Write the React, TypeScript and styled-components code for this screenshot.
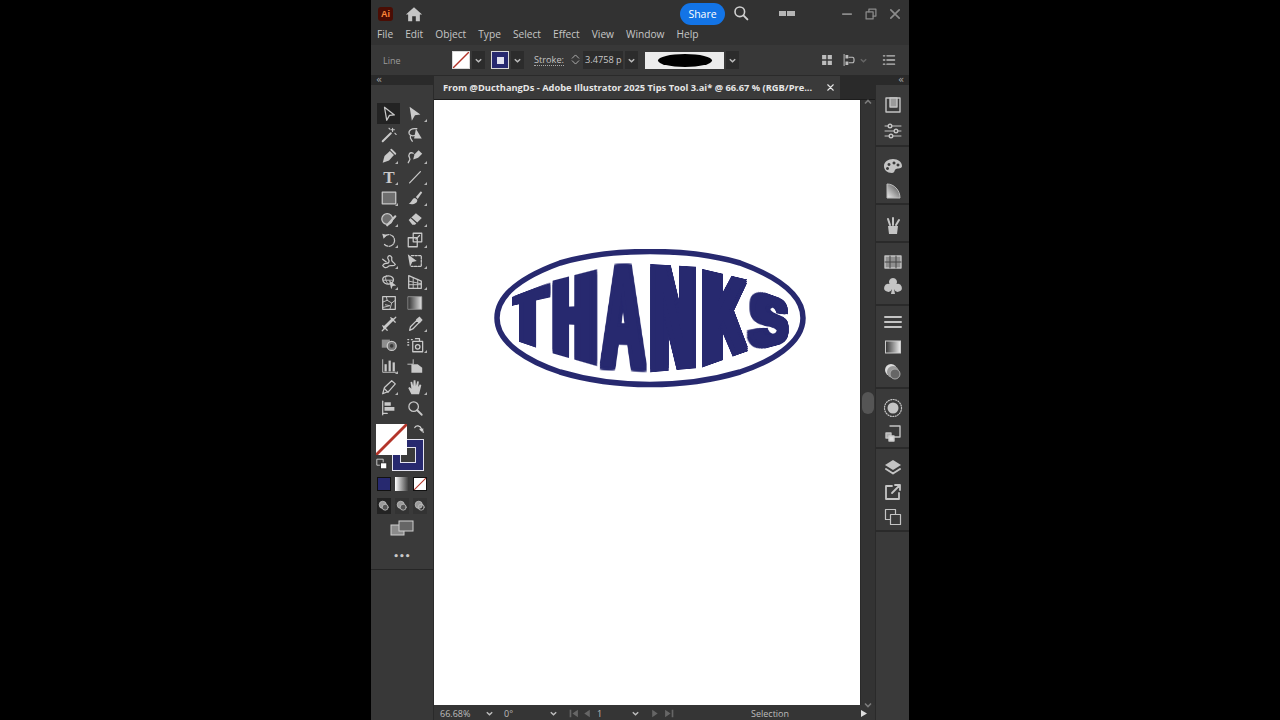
import type { ReactNode } from "react";
import styled, { createGlobalStyle } from "styled-components";

const GlobalStyle = createGlobalStyle`
  html, body, #root { margin: 0; padding: 0; height: 100%; background: #000; overflow: hidden; }
  * { box-sizing: border-box; }
`;

const Page = styled.div`
  width: 1280px;
  height: 720px;
  display: flex;
  justify-content: center;
  background: #000;
  font-family: "Open Sans", "Liberation Sans", sans-serif;
`;

const Win = styled.div`
  width: 538px;
  margin-left: 0;
  height: 720px;
  display: flex;
  flex-direction: column;
  background: #323232;
  color: #cfcfcf;
`;

const TitleBar = styled.div`
  height: 27px;
  display: flex;
  align-items: center;
  padding-left: 7px;
  background: #323232;
`;

const AiLogo = styled.div`
  width: 15px;
  height: 14px;
  border-radius: 3px;
  background: #4a0d04;
  color: #ff8a3c;
  font: bold 9px/14px "Liberation Sans", sans-serif;
  text-align: center;
`;

const HomeWrap = styled.div`
  margin-left: 12px;
  width: 20px;
  height: 18px;
  color: #c6c6c6;
`;

const Share = styled.div`
  margin-left: 255px;
  width: 45px;
  height: 22px;
  border-radius: 11px;
  background: #1374e6;
  color: #fff;
  font: 10.5px/22px "Open Sans", sans-serif;
  text-align: center;
`;

const SearchWrap = styled.div`
  margin-left: 8px;
  width: 18px;
  height: 18px;
  color: #d0d0d0;
`;

const Arrange = styled.div`
  margin-left: 28px;
  width: 16px;
  height: 5px;
  background: linear-gradient(90deg, #b5b5b5 0 7px, transparent 7px 8px, #b5b5b5 8px);
`;

const WinControls = styled.div`
  margin-left: auto;
  margin-right: 7px;
  display: flex;
  gap: 10px;
  color: #8b8b8b;
`;

const WinBtn = styled.div`
  width: 14px;
  height: 14px;
`;

const MenuBar = styled.div`
  height: 14px;
  display: flex;
  align-items: center;
  padding-left: 6px;
  gap: 12px;
  font-size: 10.2px;
  color: #c6c6c6;
  background: #323232;
`;

const ControlBar = styled.div`
  height: 30px;
  margin-top: 4px;
  display: flex;
  align-items: center;
  padding-left: 12px;
  background: #383838;
`;

const ControlLabel = styled.span`
  width: 69px;
  font-size: 9px;
  color: #9c9c9c;
`;

const Swatch = styled.div<{ $blue?: boolean; $mini?: boolean; $dark?: boolean }>`
  width: ${(p) => (p.$mini ? 14 : 18)}px;
  height: ${(p) => (p.$mini ? 14 : 18)}px;
  border: 1px solid ${(p) => (p.$dark ? "#111" : "#d8d8d8")};
  display: flex;
  align-items: center;
  justify-content: center;
  background: ${(p) => (p.$blue ? "#27296f" : "#fff")};
  overflow: hidden;
`;

const InnerWhite = styled.div`
  width: 7px;
  height: 7px;
  background: #dfe0ee;
`;

const Chevron = styled.div<{ $w?: number; $ml?: number; $dim?: boolean; $flat?: boolean }>`
  flex: none;
  width: ${(p) => p.$w ?? 13}px;
  height: ${(p) => (p.$flat ? 14 : 18)}px;
  margin-left: ${(p) => p.$ml ?? 2}px;
  display: flex;
  align-items: center;
  justify-content: center;
  background: ${(p) => (p.$flat ? "transparent" : "#2c2c2c")};
  color: ${(p) => (p.$dim ? "#666" : "#bdbdbd")};
`;

const StrokeLabel = styled.span`
  margin-left: 10px;
  width: 30px;
  font-size: 9.2px;
  color: #c4c4c4;
  border-bottom: 1px dotted #a8a8a8;
  line-height: 11px;
  white-space: nowrap;
`;

const Stepper = styled.div`
  margin-left: 5px;
  width: 13px;
  height: 18px;
  padding-top: 2px;
  color: #b8b8b8;
`;

const StrokeInput = styled.div`
  margin-left: 1px;
  width: 40px;
  height: 18px;
  padding-left: 2px;
  background: #2c2c2c;
  font: 9.2px/18px "Open Sans", sans-serif;
  color: #c8c8c8;
  white-space: nowrap;
  overflow: hidden;
`;

const BrushPreview = styled.div`
  margin-left: 7px;
  width: 79px;
  height: 17px;
  background: #ececec;
  display: flex;
  align-items: center;
  justify-content: center;
`;

const BrushBlob = styled.div`
  width: 54px;
  height: 13px;
  border-radius: 50%;
  background: #000;
`;

const ControlRight = styled.div`
  margin-left: auto;
  margin-right: 13px;
  display: flex;
  align-items: center;
  color: #bdbdbd;
`;

const SmallIcon = styled.div<{ $ml?: number }>`
  width: 14px;
  height: 14px;
  margin-left: ${(p) => p.$ml ?? 0}px;
`;

const Body = styled.div`
  flex: 1;
  display: flex;
  min-height: 0;
`;

const LeftCol = styled.div`
  width: 63px;
  flex: none;
  display: flex;
  flex-direction: column;
  background: #383838;
  border-right: 1px solid #2a2a2a;
`;

const Collapse = styled.div<{ $right?: boolean }>`
  height: 10px;
  flex: none;
  padding: 0 5px;
  display: flex;
  justify-content: ${(p) => (p.$right ? "flex-end" : "flex-start")};
  align-items: center;
  font: 10px/10px "DejaVu Sans", sans-serif;
  color: #a9a9a9;
  background: #2a2a2a;
`;

const ToolPanel = styled.div`
  height: 485px;
  flex: none;
  padding: 18px 6px 0;
  background: #3a3a3a;
  border-bottom: 1px solid #262626;
`;

const ToolGrid = styled.div`
  display: grid;
  grid-template-columns: 23px 29px;
  grid-auto-rows: 21px;
`;

const ToolCell = styled.div<{ $on?: boolean; $flag?: boolean }>`
  position: relative;
  display: flex;
  align-items: center;
  justify-content: center;
  color: #c9c9c9;
  background: ${(p) => (p.$on ? "#232323" : "transparent")};
  &::after {
    content: "";
    display: ${(p) => (p.$flag ? "block" : "none")};
    position: absolute;
    right: 2px;
    bottom: 2px;
    border-left: 3px solid transparent;
    border-bottom: 3px solid #b5b5b5;
  }
`;

const SwatchArea = styled.div`
  position: relative;
  height: 50px;
  margin-top: 6px;
`;

const FillBig = styled.div`
  position: absolute;
  left: -1px;
  top: 0;
  width: 31px;
  height: 31px;
  background: #fff;
  z-index: 2;
  overflow: hidden;
`;

const StrokeBig = styled.div`
  position: absolute;
  left: 15px;
  top: 15px;
  width: 32px;
  height: 32px;
  background: #27296f;
  border: 1px solid #e4e4f0;
  padding: 7px;
`;

const StrokeHole = styled.div`
  width: 100%;
  height: 100%;
  background: #3a3a3a;
  border: 1px solid #e4e4f0;
`;

const MiniIcon = styled.div<{ $x: number; $y: number }>`
  position: absolute;
  left: ${(p) => p.$x}px;
  top: ${(p) => p.$y}px;
  width: 12px;
  height: 12px;
  color: #d4d4d4;
`;

const ModeRow = styled.div`
  display: flex;
  gap: 4px;
  margin-top: 3px;
`;

const ModeBtn = styled.div`
  width: 14px;
  height: 14px;
  overflow: hidden;
`;

const DrawRow = styled.div`
  display: flex;
  gap: 4px;
  margin-top: 7px;
`;

const DrawBtn = styled.div<{ $on?: boolean }>`
  width: 14px;
  height: 16px;
  display: flex;
  align-items: center;
  justify-content: center;
  color: #bdbdbd;
  background: ${(p) => (p.$on ? "#232323" : "#333")};
`;

const ScreenMode = styled.div`
  margin: 5px auto 0;
  width: 24px;
  height: 18px;
  color: #bdbdbd;
`;

const Dots = styled.div`
  margin-top: 13px;
  text-align: center;
  font: bold 9px/12px "DejaVu Sans", sans-serif;
  letter-spacing: 0;
  color: #c9c9c9;
`;

const CenterCol = styled.div`
  flex: 1;
  min-width: 0;
  display: flex;
  flex-direction: column;
  background: #2a2a2a;
`;

const TabRow = styled.div`
  height: 23px;
  flex: none;
  margin-top: 1px;
  display: flex;
`;

const Tab = styled.div`
  width: 406px;
  padding: 0 4px 0 9px;
  display: flex;
  align-items: center;
  justify-content: space-between;
  background: #3a3a3a;
  font-size: 9.3px;
  font-weight: 700;
  color: #e6e6e6;
  white-space: nowrap;
`;

const CanvasRow = styled.div`
  flex: 1;
  min-height: 0;
  display: flex;
  border-top: 1px solid #1c1c1c;
  background: #333;
`;

const Canvas = styled.div`
  position: relative;
  width: 426px;
  background: #fff;
  overflow: hidden;
  flex: none;
`;

const Scrollbar = styled.div`
  position: relative;
  flex: 1;
  color: #7c7c7c;
  background: #333;
  border-left: 1px solid #2a2a2a;
`;

const ScrollThumb = styled.div`
  position: absolute;
  left: 1px;
  top: 292px;
  width: 12px;
  height: 22px;
  border-radius: 6px;
  background: #555;
`;

const ScrollArrow = styled.div<{ $top: number; $up?: boolean }>`
  position: absolute;
  left: 2px;
  top: ${(p) => p.$top}px;
  width: 10px;
  height: 10px;
  transform: ${(p) => (p.$up ? "rotate(180deg)" : "none")};
`;

const StatusBar = styled.div`
  height: 15px;
  flex: none;
  display: flex;
  align-items: center;
  padding: 2px 0 0 6px;
  font-size: 9px;
  color: #bdbdbd;
  background: #353535;
`;

const StatusText = styled.span<{ $w: number; $ml?: number }>`
  width: ${(p) => p.$w}px;
  margin-left: ${(p) => p.$ml ?? 0}px;
  flex: none;
  white-space: nowrap;
`;

const Nav = styled.div<{ $w: number; $ml?: number; $on?: boolean }>`
  display: flex;
  justify-content: space-between;
  flex: none;
  width: ${(p) => p.$w}px;
  height: 11px;
  margin-left: ${(p) => p.$ml ?? 0}px;
  color: ${(p) => (p.$on ? "#ddd" : "#666")};
`;

const RightCol = styled.div`
  width: 34px;
  flex: none;
  display: flex;
  flex-direction: column;
  background: #2a2a2a;
  border-left: 1px solid #2a2a2a;
`;

const DockGroups = styled.div`
  flex: 1;
  display: flex;
  flex-direction: column;
  gap: 2px;
`;

const DockGroup = styled.div<{ $h: number; $pad: number }>`
  height: ${(p) => p.$h}px;
  flex: none;
  padding-top: ${(p) => p.$pad}px;
  background: #3a3a3a;
  display: flex;
  flex-direction: column;
  align-items: center;
  color: #c4c4c4;
`;

const DockFill = styled.div`
  flex: 1;
  background: #3a3a3a;
`;

const DockIcon = styled.div<{ $gap?: number }>`
  width: 20px;
  height: 20px;
  flex: none;
  margin-top: ${(p) => p.$gap ?? 0}px;
`;

const LogoStage = styled.div`
  position: absolute;
  left: 60px;
  top: 149px;
  width: 314px;
  height: 140px;
`;

const LogoRing = styled.svg`
  position: absolute;
  inset: 0;
  width: 100%;
  height: 100%;
`;

const NAVY = "#27296f";

// copies of the glyph around it: a square dilation, heavy stems with sharp corners
function fatten(kx: number, ky: number) {
  const out: string[] = [];
  const steps = (k: number) => {
    const s: number[] = [];
    for (let i = -k; i < k; i += 2) s.push(i);
    s.push(k);
    return s;
  };
  for (const x of steps(kx)) for (const y of steps(ky)) out.push(`${x}px ${y}px ${NAVY}`);
  return out.join(",");
}

const WarpLetter = styled.span<{ $kx: number; $ky: number }>`
  position: absolute;
  left: 0;
  top: 0;
  text-align: center;
  transform-origin: 0 0;
  white-space: nowrap;
  font-family: "Liberation Sans", sans-serif;
  font-weight: 700;
  font-size: 100px;
  color: ${NAVY};
  text-shadow: ${(p) => fatten(p.$kx, p.$ky)};
`;

// Each letter is real text, warped onto the four corners read from the picture.
function warp(w: number, h: number, q: number[][]) {
  const [[x0, y0], [x1, y1], [x2, y2], [x3, y3]] = q;
  const dx1 = x1 - x2;
  const dx2 = x3 - x2;
  const sx = x0 - x1 + x2 - x3;
  const dy1 = y1 - y2;
  const dy2 = y3 - y2;
  const sy = y0 - y1 + y2 - y3;
  const den = dx1 * dy2 - dx2 * dy1;
  const g = (sx * dy2 - dx2 * sy) / den;
  const k = (dx1 * sy - sx * dy1) / den;
  const a = x1 - x0 + g * x1;
  const b = x3 - x0 + k * x3;
  const d = y1 - y0 + g * y1;
  const e = y3 - y0 + k * y3;
  return `matrix3d(${a / w},${d / w},0,${g / w},${b / h},${e / h},0,${k / h},0,0,1,0,${x0},${y0},0,1)`;
}

// corners in the 3x zoom of the logo: TL, TR, BR, BL
const toStage = (p: number[]) => [p[0] / 3 + 485 - 494, p[1] / 3 + 240 - 249];

const LETTERS: { c: string; ink: number; kx: number; ky: number; dx?: number; q: number[][] }[] = [
  { c: "T", ink: 57, kx: 12, ky: 2, dx: 5, q: [[80, 172], [188, 132], [188, 335], [80, 298]] },
  { c: "H", ink: 58, kx: 10, ky: 2, q: [[203, 122], [335, 88], [335, 378], [203, 340]] },
  { c: "A", ink: 72, kx: 6, ky: 2, q: [[340, 76], [490, 73], [490, 397], [340, 390]] },
  { c: "N", ink: 58, kx: 8, ky: 2, q: [[497, 72], [632, 80], [632, 385], [497, 397]] },
  { c: "K", ink: 64, kx: 8, ky: 2, q: [[645, 85], [785, 118], [785, 335], [645, 385]] },
  { c: "S", ink: 61, kx: 7, ky: 4, q: [[785, 140], [912, 185], [912, 305], [785, 338]] },
];

function Logo() {
  return (
    <LogoStage>
      <LogoRing viewBox="0 0 314 140">
        <path
          d="M3 69 C3 43 36 25 66 14 C96 5 126 2.500 156 2.500 C186 2.500 216 5 246 14 C276 25 309 43 309 69 C309 95 276 113 246 123 C216 132 186 135.500 156 135.500 C126 135.500 96 132 66 123 C36 113 3 95 3 69 Z"
          fill="none"
          stroke={NAVY}
          strokeWidth="5.500"
        />
      </LogoRing>
      {LETTERS.map((l) => {
        const w = l.ink + 2 * l.kx;
        const h = 69 + 2 * l.ky;
        return (
          <WarpLetter
            key={l.c}
            $kx={l.kx}
            $ky={l.ky}
            style={{
              width: w,
              height: h,
              lineHeight: h + "px",
              paddingLeft: l.dx ?? 0,
              transform: warp(w, h, l.q.map(toStage)),
            }}
          >
            {l.c}
          </WarpLetter>
        );
      })}
    </LogoStage>
  );
}

function Ico({ children, s = 20 }: { children: ReactNode; s?: number }) {
  return (
    <svg
      width={s}
      height={s}
      viewBox="0 0 20 20"
      fill="none"
      stroke="currentColor"
      strokeWidth="1.400"
      strokeLinejoin="round"
      strokeLinecap="round"
      style={{ display: "block" }}
    >
      {children}
    </svg>
  );
}

const F = { fill: "currentColor", stroke: "none" };

const TOOLS: { n: ReactNode; flag?: boolean; on?: boolean }[] = [
  { on: true, n: <path d="M5 2.500 L16 11 L10.500 11.500 L7.500 17 Z" /> },
  { flag: true, n: <path {...F} d="M4 2 L16 10.500 L10 11.500 L6.500 17.500 Z" /> },
  { flag: false, n: <><path d="M3 17 L12 8" strokeWidth="2.200" /><path d="M14 2.500 V6 M12.300 4.200 H16 M16.500 8 L18 9.500 M10 2.500 L11 3.500" strokeWidth="1.200" /></> },
  { n: <><path d="M12 3 C6 2 2.500 5 3.500 8.500 C4.500 11 8 11.500 11 10" /><path {...F} d="M11 3 L17.500 14 L9 14 Z" /><path d="M5 11 C4 14 6 15 7 17" /></> },
  { flag: true, n: <><path {...F} d="M3 17.500 L5 10 L11 4.500 L15.500 9 L10 15 Z" /><path d="M12.500 3 L17 7.500" strokeWidth="2" /></> },
  { flag: true, n: <><path {...F} d="M8 14 L9.500 8 L14 3.500 L18 7.500 L13.500 12 Z" /><path d="M8 7 C4 5 2 9 4 12 C5.500 14 3 16 2.500 17.500" /></> },
  { flag: true, n: <text x="10" y="16.500" textAnchor="middle" fontFamily="Liberation Serif" fontWeight="700" fontSize="19" fill="currentColor" stroke="none">T</text> },
  { flag: true, n: <path d="M4 16.500 L16 4" /> },
  { flag: true, n: <rect x="2.500" y="3.500" width="15" height="13" fill="#6f6f6f" stroke="#c9c9c9" /> },
  { flag: true, n: <><path {...F} d="M11 9 L16.500 2.500 L18 4 L13 11 Z" /><path {...F} d="M10 10 C7 10 7 14 3 16.500 C8 18 13 16 12.500 12 Z" /></> },
  { flag: true, n: <><circle cx="8" cy="10" r="6" fill="#6f6f6f" /><path d="M8 17 L17 7" strokeWidth="2.400" /></> },
  { flag: true, n: <><path {...F} d="M3 11 L11 3.500 L17.500 9 L10 16.500 H7 Z" /><path d="M6 9 L12 14.500" stroke="#3a3a3a" /></> },
  { flag: true, n: <><path d="M5 6 A6.500 6.500 0 1 1 5 15" strokeDasharray="5 1.500" /><path {...F} d="M2.500 3 L8 4.500 L4 8.500 Z" /></> },
  { flag: true, n: <><rect x="2.500" y="7.500" width="10" height="10" /><rect x="8" y="2.500" width="9.500" height="9.500" /><path d="M11 9 L15 5" /></> },
  { flag: true, n: <><path d="M3 15 C6 10 8 15 10 11 C11 8 7 8 9 5 C11 3 14 5 13 8 C12 11 16 11 17 14 C14 17 11 13 8 17 C6 18 4 17 3 15 Z" /><path d="M3 8 L7 11" /></> },
  { flag: true, n: <><path d="M6 4 H17 V16 H6" strokeDasharray="2.500 1.500" /><path {...F} d="M2 2.500 L12 10 L7 11 L4.500 16.500 Z" /></> },
  { flag: true, n: <><path d="M3 7 C3 3 11 2 14 5 C16 7 15 11 11 12 C7 13 3 11 3 7 Z" /><path d="M7 3 C5 6 7 10 9 12 M3.500 8 H14" strokeWidth="1" /><path {...F} d="M10 8 L18 14 L14 14.500 L12.500 18 Z" /></> },
  { flag: true, n: <><path d="M3 3 L17 9 V17 H3 Z" /><path d="M8 5 V17 M13 7 V17 M3 9 L17 12 M3 13 H17" strokeWidth="1" /></> },
  { n: <><rect x="3" y="3" width="14" height="14" /><path d="M3 9 L8 7 L7 3 M8 7 L13 10 L17 7 M13 10 L11 17 M6 12 L11 13 L3 15" strokeWidth="1" /></> },
  { n: <><defs><linearGradient id="grd"><stop offset="0" stopColor="#333" /><stop offset="1" stopColor="#e2e2e2" /></linearGradient></defs><rect x="2.500" y="3" width="15" height="14" fill="url(#grd)" stroke="#a0a0a0" strokeWidth="0.800" /></> },
  { n: <><path d="M5 14 L14 5" strokeWidth="3.200" /><path d="M3 12 L8 17 M12 3 L17 8 M2.500 17.500 L5 15 M15 5 L17.500 2.500" /></> },
  { flag: true, n: <><path d="M4 17 L5 13 L12 6 L14.500 8.500 L7.500 15.500 Z" /><path {...F} d="M11 5 L15 1.800 L18.500 5.500 L15 9.500 Z" /></> },
  { n: <><rect x="2" y="4" width="9" height="9" fill="#8e8e8e" stroke="none" /><circle cx="13" cy="11" r="5" fill="#777" /><circle cx="13" cy="11" r="2" fill="#3a3a3a" stroke="none" /></> },
  { flag: true, n: <><path d="M2 4 H4 M2 7 H4 M6 4 H8 M2 10 H4" strokeDasharray="1 1" /><rect x="7.500" y="6" width="11" height="11.500" /><circle cx="13" cy="12" r="2.500" /><path d="M10.500 3 H15 V6" /></> },
  { flag: true, n: <><path d="M3 3 V17 H18" strokeWidth="1" /><rect x="5" y="8" width="2.500" height="8" {...F} /><rect x="9.500" y="4" width="2.500" height="12" {...F} /><rect x="14" y="6" width="2.500" height="10" {...F} /></> },
  { n: <><path d="M8 3 V8 H2" strokeWidth="1" /><path {...F} d="M6 8 H13 L18 12 V17.500 H6 Z" /></> },
  { flag: true, n: <><path d="M3 17.500 L5 10.500 L13 3 L17 6.500 L10 14.500 Z" /><path d="M5 12 L9 16" /></> },
  { flag: true, n: <path {...F} d="M6 18 L2.500 11 L4 10 L6 12 L5 4.500 L6.800 4.200 L8 9 L8.500 2.500 L10.500 2.500 L11 9 L12.500 3.500 L14.300 4 L13.500 10 L15.500 7 L17 8 L14.500 18 Z" /> },
  { n: <><path d="M3 17.500 V2.500" /><path {...F} d="M5 3.500 H12 V7.500 H5 Z M5 9 H16 V13 H5 Z" /><path d="M3 16 H8" /></> },
  { n: <><circle cx="8.500" cy="8.500" r="5.300" /><path d="M12.500 12.500 L17.500 17.500" strokeWidth="2" /></> },
];

const SlashFill = () => (
  <svg width="100%" height="100%" viewBox="0 0 20 20" preserveAspectRatio="none" style={{ display: "block" }}>
    <path d="M-1 21 L21 -1" stroke="#b3352a" strokeWidth="1.800" />
  </svg>
);

const Down = ({ s = 9 }: { s?: number }) => (
  <svg width={s} height={s} viewBox="0 0 10 10" fill="none" stroke="currentColor" strokeWidth="1.600">
    <path d="M2 3.500 L5 6.500 L8 3.500" />
  </svg>
);

export default function App() {
  return (
    <Page>
      <GlobalStyle />
      <Win>
        <TitleBar>
          <AiLogo>Ai</AiLogo>
          <HomeWrap>
            <Ico s={18}>
              <path {...F} d="M10 2.500 L19 10.500 H16.500 V18 H12 V12.500 H8 V18 H3.500 V10.500 H1 Z" />
            </Ico>
          </HomeWrap>
          <Share>Share</Share>
          <SearchWrap>
            <Ico s={16}>
              <circle cx="8.500" cy="8.500" r="6" strokeWidth="2" />
              <path d="M13 13 L18 18" strokeWidth="2.400" />
            </Ico>
          </SearchWrap>
          <Arrange />
          <WinControls>
            <WinBtn>
              <Ico s={14}>
                <path d="M4 10 H16" strokeWidth="2.500" />
              </Ico>
            </WinBtn>
            <WinBtn>
              <Ico s={14}>
                <rect x="3" y="7" width="10" height="10" strokeWidth="1.800" />
                <path d="M7 7 V3 H17 V13 H13" strokeWidth="1.800" />
              </Ico>
            </WinBtn>
            <WinBtn>
              <Ico s={14}>
                <path d="M4 4 L16 16 M16 4 L4 16" strokeWidth="2.400" />
              </Ico>
            </WinBtn>
          </WinControls>
        </TitleBar>
        <MenuBar>
          {["File", "Edit", "Object", "Type", "Select", "Effect", "View", "Window", "Help"].map((m) => (
            <span key={m}>{m}</span>
          ))}
        </MenuBar>
        <ControlBar>
          <ControlLabel>Line</ControlLabel>
          <Swatch>
            <SlashFill />
          </Swatch>
          <Chevron>
            <Down />
          </Chevron>
          <Chevron $w={4} $flat />
          <Swatch $blue>
            <InnerWhite />
          </Swatch>
          <Chevron>
            <Down />
          </Chevron>
          <StrokeLabel>Stroke:</StrokeLabel>
          <Stepper>
            <Ico s={13}>
              <path d="M5 8 L10 3 L15 8 M5 12 L10 17 L15 12" />
            </Ico>
          </Stepper>
          <StrokeInput>3.4758 p</StrokeInput>
          <Chevron>
            <Down />
          </Chevron>
          <BrushPreview>
            <BrushBlob />
          </BrushPreview>
          <Chevron>
            <Down />
          </Chevron>
          <ControlRight>
            <SmallIcon>
              <Ico s={14}>
                <path {...F} d="M3 3 H9 V9 H3 Z M11 3 H17 V9 H11 Z M3 11 H9 V17 H3 Z M11 11 H17 V17 H11 Z" />
              </Ico>
            </SmallIcon>
            <SmallIcon $ml={8}>
              <Ico s={14}>
                <path d="M3 2 V18" />
                <path {...F} d="M5 3 H9 V8 H5 Z M5 12 H9 V17 H5 Z" />
                <path d="M10 6 H15 C18 6 18 14 15 14 H10" strokeWidth="1.600" />
              </Ico>
            </SmallIcon>
            <Chevron $flat $w={10} $ml={2} $dim>
              <Down />
            </Chevron>
            <SmallIcon $ml={14}>
              <Ico s={14}>
                <path d="M7 4 H18 M7 10 H18 M7 16 H18 M2 4 H4 M2 10 H4 M2 16 H4" strokeWidth="1.800" />
              </Ico>
            </SmallIcon>
          </ControlRight>
        </ControlBar>
        <Body>
          <LeftCol>
            <Collapse>«</Collapse>
            <ToolPanel>
              <ToolGrid>
                {TOOLS.map((t, i) => (
                  <ToolCell key={i} $on={t.on} $flag={t.flag}>
                    <Ico s={18}>{t.n}</Ico>
                  </ToolCell>
                ))}
              </ToolGrid>
              <SwatchArea>
                <FillBig>
                  <SlashFill />
                </FillBig>
                <StrokeBig>
                  <StrokeHole />
                </StrokeBig>
                <MiniIcon $x={36} $y={0}>
                  <Ico s={12}>
                    <path d="M3 6 C5 2 12 2 14 8 M17 14 C16 9 15 8 14 8" strokeWidth="2" />
                    <path {...F} d="M10 8 H18 L14 13 Z" />
                  </Ico>
                </MiniIcon>
                <MiniIcon $x={-1} $y={34}>
                  <Ico s={12}>
                    <rect x="2" y="2" width="10" height="10" strokeWidth="1.500" />
                    <rect x="8" y="8" width="10" height="10" fill="#fff" stroke="#222" strokeWidth="1.500" />
                  </Ico>
                </MiniIcon>
              </SwatchArea>
              <ModeRow>
                <ModeBtn>
                  <Swatch $blue $mini $dark />
                </ModeBtn>
                <ModeBtn>
                  <svg width="14" height="14" viewBox="0 0 14 14" style={{ display: "block" }}>
                    <defs>
                      <linearGradient id="grd2">
                        <stop offset="0" stopColor="#fff" />
                        <stop offset="1" stopColor="#333" />
                      </linearGradient>
                    </defs>
                    <rect width="14" height="14" fill="url(#grd2)" />
                  </svg>
                </ModeBtn>
                <ModeBtn>
                  <Swatch $mini $dark>
                    <SlashFill />
                  </Swatch>
                </ModeBtn>
              </ModeRow>
              <DrawRow>
                {[true, false, false].map((on, i) => (
                  <DrawBtn key={i} $on={on}>
                    <Ico s={12}>
                      <circle cx="8" cy="8" r="6" fill="#9a9a9a" />
                      <circle cx="12" cy="12" r="5" fill={i === 2 ? "none" : "#555"} />
                    </Ico>
                  </DrawBtn>
                ))}
              </DrawRow>
              <ScreenMode>
                <svg width="24" height="18" viewBox="0 0 24 18" style={{ display: "block" }}>
                  <rect x="1" y="6" width="13" height="10" fill="#8b8b8b" stroke="#cfcfcf" />
                  <rect x="9" y="2" width="14" height="10" fill="#666" stroke="#cfcfcf" />
                </svg>
              </ScreenMode>
              <Dots>•••</Dots>
            </ToolPanel>
          </LeftCol>
          <CenterCol>
            <TabRow>
              <Tab>
                <span>From @DucthangDs - Adobe Illustrator 2025 Tips Tool 3.ai* @ 66.67 % (RGB/Pre...</span>
                <Ico s={11}>
                  <path d="M5 5 L15 15 M15 5 L5 15" strokeWidth="2" />
                </Ico>
              </Tab>
            </TabRow>
            <CanvasRow>
              <Canvas>
                <Logo />
              </Canvas>
              <Scrollbar>
                <ScrollArrow $top={4} $up>
                  <Down s={10} />
                </ScrollArrow>
                <ScrollThumb />
                <ScrollArrow $top={593}>
                  <Down s={10} />
                </ScrollArrow>
              </Scrollbar>
            </CanvasRow>
            <StatusBar>
              <StatusText $w={43}>66.68%</StatusText>
              <Chevron $flat $w={12} $ml={0}>
                <Down />
              </Chevron>
              <StatusText $w={43} $ml={9}>0°</StatusText>
              <Chevron $flat $w={12} $ml={0}>
                <Down />
              </Chevron>
              <Nav $w={24} $ml={9}>
                <Ico s={11}>
                  <path {...F} d="M3 3 H6 V17 H3 Z M18 3 V17 L8 10 Z" />
                </Ico>
                <Ico s={11}>
                  <path {...F} d="M16 3 V17 L6 10 Z" />
                </Ico>
              </Nav>
              <StatusText $w={32} $ml={5}>1</StatusText>
              <Chevron $flat $w={12} $ml={0}>
                <Down />
              </Chevron>
              <Nav $w={25} $ml={9}>
                <Ico s={11}>
                  <path {...F} d="M4 3 L14 10 L4 17 Z" />
                </Ico>
                <Ico s={11}>
                  <path {...F} d="M2 3 L12 10 L2 17 Z M14 3 H17 V17 H14 Z" />
                </Ico>
              </Nav>
              <StatusText $w={60} $ml={76}>Selection</StatusText>
              <Nav $w={10} $ml={48} $on>
                <Ico s={11}>
                  <path {...F} d="M4 3 L16 10 L4 17 Z" />
                </Ico>
              </Nav>
            </StatusBar>
          </CenterCol>
          <RightCol>
            <Collapse $right>«</Collapse>
            <DockGroups>
              <DockGroup $h={60} $pad={10}>
                <DockIcon>
                  <Ico>
                    <rect x="3" y="3" width="14" height="14" />
                    <rect x="7" y="3" width="7" height="9" fill="#9a9a9a" />
                  </Ico>
                </DockIcon>
                <DockIcon $gap={6}>
                  <Ico>
                    <path d="M2 5 H18 M2 10 H18 M2 15 H18" strokeWidth="1" />
                    <circle cx="7" cy="5" r="1.800" fill="#3a3a3a" />
                    <circle cx="13" cy="10" r="1.800" fill="#3a3a3a" />
                    <circle cx="8" cy="15" r="1.800" fill="#3a3a3a" />
                  </Ico>
                </DockIcon>
              </DockGroup>
              <DockGroup $h={56} $pad={9}>
                <DockIcon>
                  <Ico>
                    <path {...F} fillRule="evenodd" d="M10 3 C15 3 19 6 19 10 C19 13 15 12 13 13 C11 14 12 17 9 17 C4 17 1 14 1 10 C1 6 5 3 10 3 Z M6 7 a1.500 1.500 0 1 0 0.010 0 Z M11 5.500 a1.500 1.500 0 1 0 0.010 0 Z M4.500 11 a1.500 1.500 0 1 0 0.010 0 Z M15 7.500 a1.500 1.500 0 1 0 0.010 0 Z" />
                  </Ico>
                </DockIcon>
                <DockIcon $gap={5}>
                  <svg width="20" height="20" viewBox="0 0 20 20" style={{ display: "block" }}>
                    <defs>
                      <linearGradient id="grd3" x1="1" y1="0" x2="0" y2="1">
                        <stop offset="0" stopColor="#444" />
                        <stop offset="1" stopColor="#eee" />
                      </linearGradient>
                    </defs>
                    <path d="M4 3 C11 3 17 9 17 17 H4 Z" fill="url(#grd3)" stroke="#bbb" />
                  </svg>
                </DockIcon>
              </DockGroup>
              <DockGroup $h={36} $pad={11}>
                <DockIcon>
                  <Ico>
                    <path {...F} d="M5 10 H15 L14 18 H6 Z" />
                    <path d="M7 9 L5 3 M10 9 V2 M13 9 L16 4" strokeWidth="2" />
                  </Ico>
                </DockIcon>
              </DockGroup>
              <DockGroup $h={61} $pad={9}>
                <DockIcon>
                  <Ico>
                    <rect x="2" y="4" width="16" height="12" fill="#8f8f8f" stroke="#c4c4c4" />
                    <path d="M2 10 H18 M7 4 V16 M13 4 V16" stroke="#444" strokeWidth="1" />
                  </Ico>
                </DockIcon>
                <DockIcon $gap={4}>
                  <Ico>
                    <path {...F} d="M10 2 A4 4 0 0 1 13.500 8 A4 4 0 1 1 11 13 L12 18 H8 L9 13 A4 4 0 1 1 6.500 8 A4 4 0 0 1 10 2 Z" />
                  </Ico>
                </DockIcon>
              </DockGroup>
              <DockGroup $h={81} $pad={6}>
                <DockIcon>
                  <Ico>
                    <path d="M2 5 H18 M2 10 H18 M2 15 H18" strokeWidth="2" />
                  </Ico>
                </DockIcon>
                <DockIcon $gap={5}>
                  <svg width="20" height="20" viewBox="0 0 20 20" style={{ display: "block" }}>
                    <defs>
                      <linearGradient id="grd4">
                        <stop offset="0" stopColor="#333" />
                        <stop offset="1" stopColor="#eee" />
                      </linearGradient>
                    </defs>
                    <rect x="2.500" y="4" width="15" height="12" fill="url(#grd4)" stroke="#ccc" />
                  </svg>
                </DockIcon>
                <DockIcon $gap={5}>
                  <svg width="20" height="20" viewBox="0 0 20 20" style={{ display: "block" }}>
                    <circle cx="8" cy="8" r="6" fill="#ddd" />
                    <circle cx="10" cy="10" r="6" fill="#999" />
                    <circle cx="12" cy="12" r="5" fill="#666" stroke="#aaa" />
                  </svg>
                </DockIcon>
              </DockGroup>
              <DockGroup $h={58} $pad={9}>
                <DockIcon>
                  <Ico>
                    <circle cx="10" cy="10" r="5.500" {...F} />
                    <circle cx="10" cy="10" r="8.500" strokeDasharray="1 1.500" strokeWidth="1.200" />
                  </Ico>
                </DockIcon>
                <DockIcon $gap={5}>
                  <Ico>
                    <path d="M7 3 H17 V14 H10" />
                    <rect x="3" y="10" width="5" height="5" fill="#aaa" />
                    <rect x="6" y="13" width="5" height="5" fill="#ddd" stroke="#ccc" />
                  </Ico>
                </DockIcon>
              </DockGroup>
              <DockGroup $h={81} $pad={9}>
                <DockIcon>
                  <Ico>
                    <path {...F} d="M10 2 L18 7 L10 12 L2 7 Z" />
                    <path d="M3 11 L10 15.500 L17 11" strokeWidth="2" />
                  </Ico>
                </DockIcon>
                <DockIcon $gap={4}>
                  <Ico>
                    <path d="M9 4 H3 V17 H16 V11" strokeWidth="1.800" />
                    <path d="M9 11 L17 3 M12 3 H17 V8" strokeWidth="1.800" />
                  </Ico>
                </DockIcon>
                <DockIcon $gap={5}>
                  <Ico>
                    <rect x="2.500" y="2.500" width="10" height="10" strokeWidth="1.200" />
                    <rect x="7.500" y="7.500" width="10" height="10" strokeWidth="1.200" fill="#3a3a3a" />
                  </Ico>
                </DockIcon>
              </DockGroup>
              <DockFill />
            </DockGroups>
          </RightCol>
        </Body>
      </Win>
    </Page>
  );
}
